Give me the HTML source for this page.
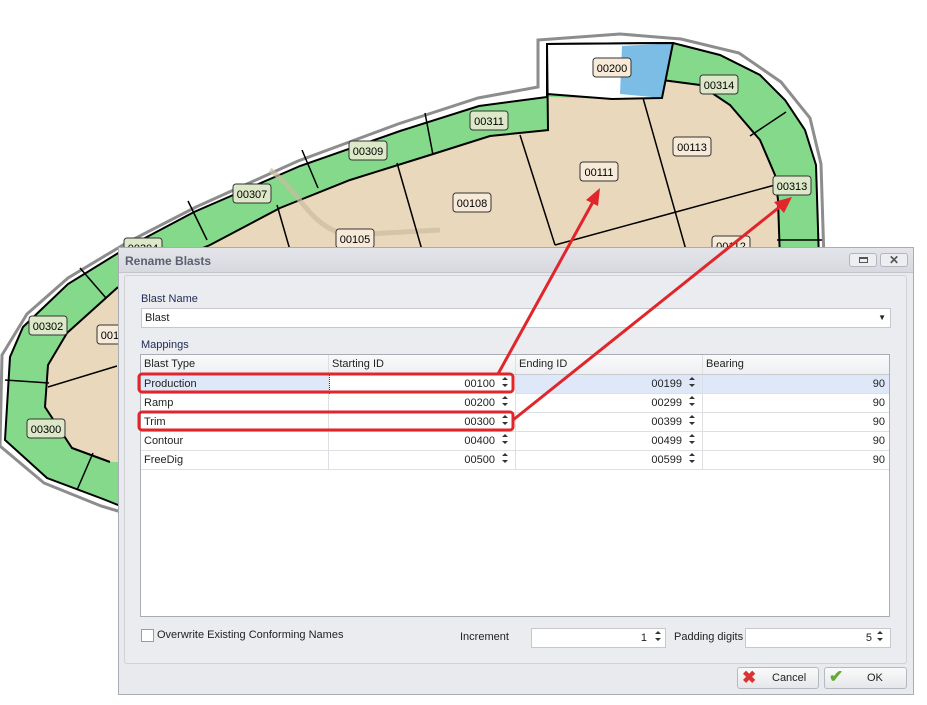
<!DOCTYPE html>
<html><head><style>
*{margin:0;padding:0;box-sizing:border-box}
body{width:927px;height:705px;background:#fff;position:relative;overflow:hidden;font-family:"Liberation Sans",sans-serif;font-size:11px;color:#222}
.abs{position:absolute}
.dlg{left:118px;top:247px;width:796px;height:448px;background:#e9eaee;border:1px solid #a9acb5}
.title{left:0;top:0;width:794px;height:25px;background:linear-gradient(#e4e5ea,#d8d9df);border-bottom:1px solid #c3c5cc;font-weight:bold;color:#5b6070;font-size:12px;padding:6px 0 0 6px}
.tb{top:5px;width:28px;height:14px;border:1px solid #b3b6bf;border-radius:3px;background:#eceef2}
.panel{left:5px;top:27px;width:783px;height:389px;border:1px solid #d0d2d8;border-radius:3px;background:#ebecf0}
.lbl{color:#1e2a55}
.inp{background:#fff;border:1px solid #c6c8ce}
.grid{left:21px;top:106px;width:750px;height:263px;background:#fff;border:1px solid #a9acb4}
.row{position:absolute;left:0;width:748px;height:19px;border-bottom:1px solid #dedfe3}
.c{position:absolute;top:0;height:19px;line-height:18px;border-right:1px solid #dedfe3}
.r{text-align:right}
.btn{top:419px;height:22px;border:1px solid #b6b9c0;border-radius:3px;background:linear-gradient(#fafafa,#e6e7ea);line-height:20px}
</style></head><body>
<svg class="abs" style="left:0;top:0" width="927" height="705">
<polygon points="118,511 101,506 44,483 0,446 2,355 27,314 68,278 128,242 196,207 298,161 398,124 478,98 538,87 538,40 620,34 681,39 739,53 781,82 810,118 821,164 824,260 824,511" fill="#fff" stroke="#8d8d8d" stroke-width="3"/>
<polygon points="118,505 103,499 47,478 5,440 10,357 23,327 68,284 128,247 194,212 300,166 400,131 479,106 547,97 547,44 673,43 720,55 760,75 785,100 805,130 816,165 819,260 819,505" fill="#84d98a" stroke="#000" stroke-width="2"/>
<polygon points="118,462 110,462 72,448 45,407 48,365 67,333 117,288 160,266 210,245 280,208 350,180 430,155 490,136 548,130 548,97 612,99 662,80 700,85 730,105 760,140 775,175 778,200 780,260 780,505 118,505" fill="#ead8bc"/>
<polyline points="110,462 72,448 45,407 48,365 67,333 117,288 160,266 210,245 280,208 350,180 430,155 490,136 549,130" fill="none" stroke="#000" stroke-width="2"/>
<polyline points="662,80 700,85 730,105 760,140 775,175 778,200 780,260" fill="none" stroke="#000" stroke-width="2"/>
<polygon points="547,44 673,43 662,98 612,99 547,94" fill="#fff"/>
<polygon points="622,46 673,43 662,98 620,94" fill="#7cbde6"/>
<polyline points="548,130 547,44 673,43 662,98 612,99 547,94" fill="none" stroke="#000" stroke-width="2"/>
<path d="M270,170 C300,190 310,230 350,235 L440,230" fill="none" stroke="#cbbca0" stroke-width="5" opacity=".7"/>
<g stroke="#000" stroke-width="1.5" fill="none">
<line x1="5" y1="380" x2="49" y2="383"/><line x1="48" y1="387" x2="117" y2="366"/>
<line x1="93" y1="453" x2="77" y2="490"/><line x1="80" y1="268" x2="106" y2="298"/>
<line x1="188" y1="201" x2="207" y2="240"/><line x1="302" y1="150" x2="318" y2="188"/>
<line x1="425" y1="113" x2="433" y2="155"/><line x1="277" y1="205" x2="290" y2="250"/>
<line x1="397" y1="163" x2="422" y2="250"/><line x1="643" y1="98" x2="686" y2="250"/>
<line x1="520" y1="135" x2="555" y2="245"/><line x1="555" y1="245" x2="775" y2="185"/>
<line x1="750" y1="136" x2="786" y2="112"/><line x1="777" y1="240" x2="822" y2="240"/>
</g>
<g font-family="Liberation Sans" font-size="11" text-anchor="middle">
<g fill="#f7ead8" stroke="#333"><rect x="593" y="58" width="38" height="19" rx="3"/><rect x="673" y="137" width="38" height="19" rx="3"/><rect x="580" y="162" width="38" height="19" rx="3"/><rect x="453" y="193" width="38" height="19" rx="3"/><rect x="336" y="229" width="38" height="19" rx="3"/><rect x="712" y="236" width="38" height="19" rx="3"/><rect x="97" y="325" width="38" height="19" rx="3"/></g>
<g fill="#dde8c8" stroke="#333"><rect x="700" y="75" width="38" height="19" rx="3"/><rect x="773" y="176" width="38" height="19" rx="3"/><rect x="470" y="111" width="38" height="19" rx="3"/><rect x="349" y="141" width="38" height="19" rx="3"/><rect x="233" y="184" width="38" height="19" rx="3"/><rect x="124" y="238" width="38" height="19" rx="3"/><rect x="29" y="316" width="38" height="19" rx="3"/><rect x="27" y="419" width="38" height="19" rx="3"/></g>
<g fill="#000"><text x="612" y="72">00200</text><text x="692" y="151">00113</text><text x="599" y="176">00111</text><text x="472" y="207">00108</text><text x="355" y="243">00105</text><text x="731" y="250">00112</text><text x="116" y="339">00105</text><text x="719" y="89">00314</text><text x="792" y="190">00313</text><text x="489" y="125">00311</text><text x="368" y="155">00309</text><text x="252" y="198">00307</text><text x="143" y="252">00304</text><text x="48" y="330">00302</text><text x="46" y="433">00300</text></g>
</g>
</svg>
<div class="abs dlg">
<div class="abs title">Rename Blasts</div>
<div class="abs tb" style="left:730px"><div class="abs" style="left:9px;top:3px;width:9px;height:6px;border:1px solid #555;border-top-width:2px"></div></div>
<div class="abs tb" style="left:761px;text-align:center;line-height:12px;font-size:12px;font-weight:bold;color:#555">✕</div>
<div class="abs panel"></div>
<div class="abs lbl" style="left:22px;top:45px">Blast Name</div>
<div class="abs inp" style="left:22px;top:60px;width:750px;height:20px;padding:3px 0 0 3px">Blast<span class="abs" style="right:4px;top:4px;font-size:8px">▼</span></div>
<div class="abs lbl" style="left:22px;top:91px">Mappings</div>
<div class="abs grid">
<div class="row" style="top:0;height:20px;background:linear-gradient(#fafafb,#eeeff2);border-bottom:1px solid #c9cbd1">
<div class="c" style="left:0;width:188px;padding-left:3px;line-height:19px">Blast Type</div><div class="c" style="left:188px;width:187px;padding-left:3px;line-height:19px">Starting ID</div><div class="c" style="left:375px;width:187px;padding-left:3px;line-height:19px">Ending ID</div><div class="c" style="left:562px;width:186px;padding-left:3px;line-height:19px;border:none">Bearing</div></div>
<div class="row" style="top:20px;background:#dfe8f8"><div class="c" style="left:0;width:188px;padding-left:3px">Production</div><div class="c r" style="left:188px;width:187px;padding-right:20px;background:#fff;border-left:1px dotted #333">00100</div><div class="c r" style="left:375px;width:187px;padding-right:20px">00199</div><div class="c r" style="left:562px;width:186px;padding-right:4px;border:none">90</div></div>
<div class="row" style="top:39px"><div class="c" style="left:0;width:188px;padding-left:3px">Ramp</div><div class="c r" style="left:188px;width:187px;padding-right:20px">00200</div><div class="c r" style="left:375px;width:187px;padding-right:20px">00299</div><div class="c r" style="left:562px;width:186px;padding-right:4px;border:none">90</div></div>
<div class="row" style="top:58px"><div class="c" style="left:0;width:188px;padding-left:3px">Trim</div><div class="c r" style="left:188px;width:187px;padding-right:20px">00300</div><div class="c r" style="left:375px;width:187px;padding-right:20px">00399</div><div class="c r" style="left:562px;width:186px;padding-right:4px;border:none">90</div></div>
<div class="row" style="top:77px"><div class="c" style="left:0;width:188px;padding-left:3px">Contour</div><div class="c r" style="left:188px;width:187px;padding-right:20px">00400</div><div class="c r" style="left:375px;width:187px;padding-right:20px">00499</div><div class="c r" style="left:562px;width:186px;padding-right:4px;border:none">90</div></div>
<div class="row" style="top:96px"><div class="c" style="left:0;width:188px;padding-left:3px">FreeDig</div><div class="c r" style="left:188px;width:187px;padding-right:20px">00500</div><div class="c r" style="left:375px;width:187px;padding-right:20px">00599</div><div class="c r" style="left:562px;width:186px;padding-right:4px;border:none">90</div></div>
</div>
<div class="abs" style="left:22px;top:381px;width:13px;height:13px;border:1px solid #9a9ca3;background:#fff"></div>
<div class="abs" style="left:38px;top:381px">Overwrite Existing Conforming Names</div>
<div class="abs" style="left:341px;top:383px">Increment</div>
<div class="abs inp r" style="left:412px;top:380px;width:135px;height:20px;padding:3px 18px 0 0">1</div>
<div class="abs" style="left:555px;top:383px">Padding digits</div>
<div class="abs inp r" style="left:626px;top:380px;width:146px;height:20px;padding:3px 18px 0 0">5</div>
<div class="abs btn" style="left:618px;width:82px"><span style="position:absolute;left:4px;top:0;color:#d33;font-size:17px;font-weight:bold">✖</span><span style="position:absolute;left:34px">Cancel</span></div>
<div class="abs btn" style="left:705px;width:83px"><span style="position:absolute;left:4px;top:-1px;color:#6a3;font-size:17px;font-weight:bold">✔</span><span style="position:absolute;left:42px">OK</span></div>
</div>
<svg class="abs" style="left:0;top:0" width="927" height="705">
<g fill="#333">
<path d="M502,380 l3,-3 l3,3z M502,384 h6 l-3,3z"/><path d="M502,399 l3,-3 l3,3z M502,403 h6 l-3,3z"/><path d="M502,418 l3,-3 l3,3z M502,422 h6 l-3,3z"/><path d="M502,437 l3,-3 l3,3z M502,441 h6 l-3,3z"/><path d="M502,456 l3,-3 l3,3z M502,460 h6 l-3,3z"/>
<path d="M689,380 l3,-3 l3,3z M689,384 h6 l-3,3z"/><path d="M689,399 l3,-3 l3,3z M689,403 h6 l-3,3z"/><path d="M689,418 l3,-3 l3,3z M689,422 h6 l-3,3z"/><path d="M689,437 l3,-3 l3,3z M689,441 h6 l-3,3z"/><path d="M689,456 l3,-3 l3,3z M689,460 h6 l-3,3z"/>
<path d="M655,634 l3,-3 l3,3z M655,638 h6 l-3,3z"/><path d="M877,634 l3,-3 l3,3z M877,638 h6 l-3,3z"/>
</g>
<g fill="none" stroke="#e0262b" stroke-width="3">
<rect x="139" y="374" width="374" height="18" rx="3"/><rect x="139" y="412" width="374" height="18" rx="3"/>
<line x1="498" y1="374" x2="594" y2="200"/><line x1="513" y1="420" x2="782" y2="205"/>
</g>
<g fill="#e0262b"><polygon points="600,188 586,200 598,206"/><polygon points="792,197 774,202 784,213"/></g>
</svg>
</body></html>
